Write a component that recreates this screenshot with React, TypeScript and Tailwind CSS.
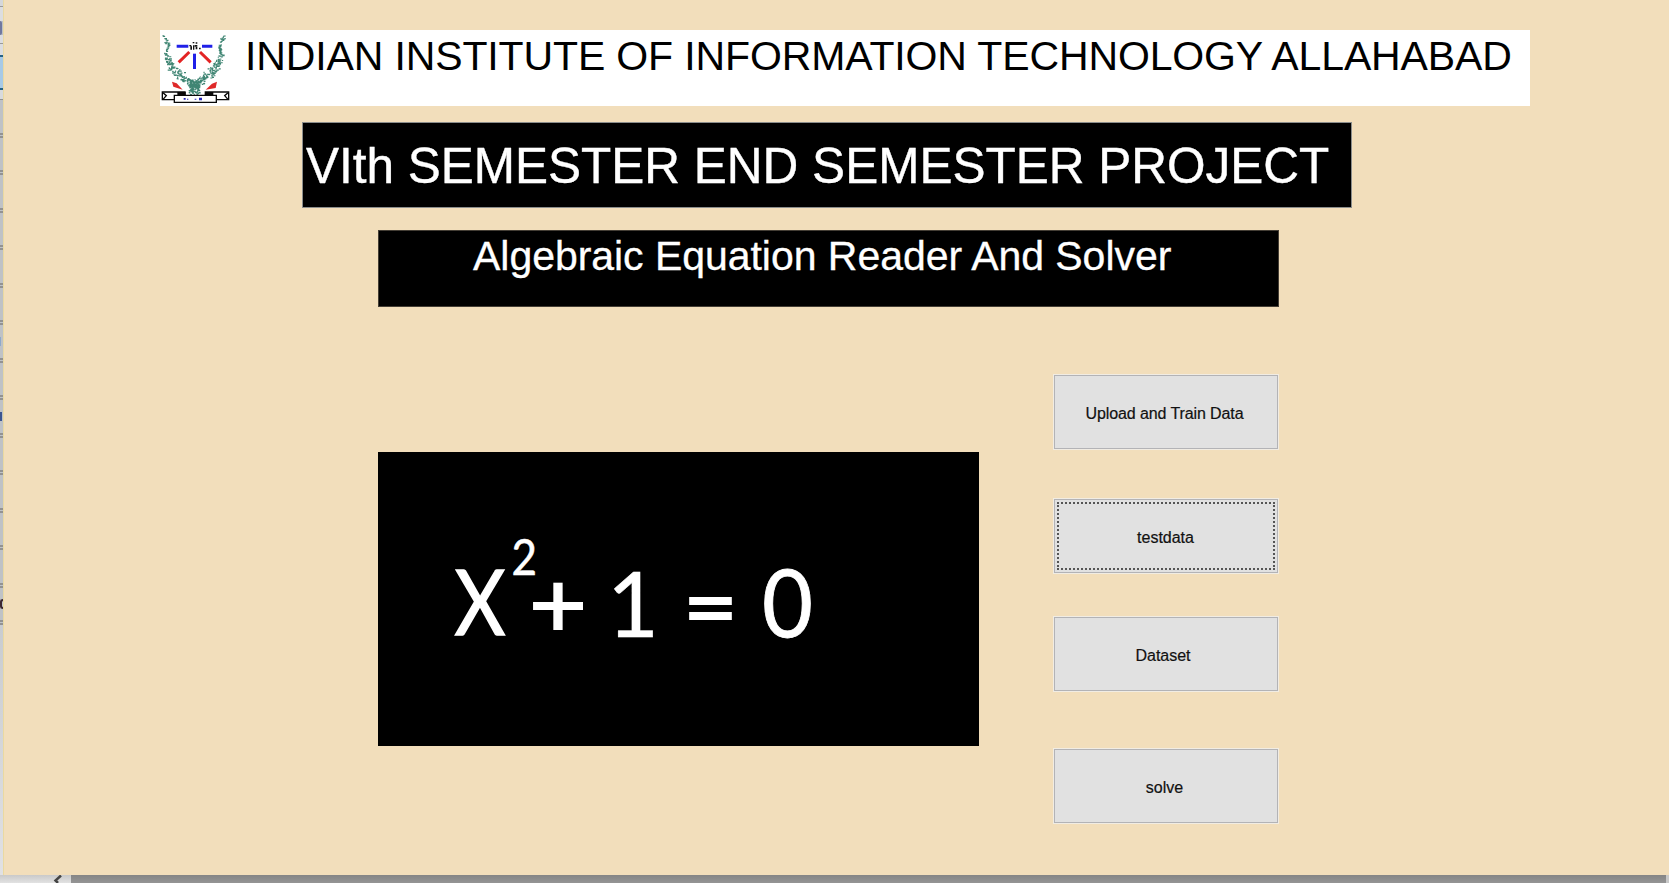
import React from 'react';

type Stop = [number, number, number];

const leftBranch: Stop[] = [
  [38, 45, 3], [48, 62, 8], [53, 80, 5], [48, 100, 8], [54, 122, 12],
  [66, 142, 17], [86, 160, 19], [106, 178, 17], [124, 192, 14],
];
const rightBranch: Stop[] = leftBranch.map(([x, y, r]) => [261 - x, y, r]);

function leaves(stops: Stop[], seed: number) {
  let s = seed;
  const next = () => {
    s = (s * 16807) % 2147483647;
    return s / 2147483647;
  };
  let d = '';
  for (let i = 0; i < stops.length - 1; i++) {
    const [x0, y0, r0] = stops[i];
    const [x1, y1, r1] = stops[i + 1];
    const count = Math.round((r0 + r1) * 0.95);
    for (let k = 0; k < count; k++) {
      const t = next();
      const r = r0 + (r1 - r0) * t;
      const x = x0 + (x1 - x0) * t + (next() - 0.5) * 1.5 * r;
      const y = y0 + (y1 - y0) * t + (next() - 0.5) * 1.1 * r;
      const w = next() > 0.5 ? 6 : 3.5;
      d += `M${x.toFixed(1)} ${y.toFixed(1)}h${w}v3.5h-${w}z`;
    }
  }
  return d;
}

const trunk: Stop[] = [[131, 182, 20], [131, 200, 20], [131, 218, 20]];
const leafPath = leaves(leftBranch, 71) + leaves(rightBranch, 913) + leaves(trunk, 37) + leaves(trunk, 531);

function Emblem() {
  return (
    <svg className="block h-[75px] w-[70px] shrink-0" viewBox="30 30 210 225">
      <path d={leafPath} fill="#3f8573" />
      <path d="M80 79H115M156 79H187" stroke="#2020e8" strokeWidth="9" />
      <path d="M133.500 101V147" stroke="#2020e8" strokeWidth="9" />
      <path d="M118 96L86 127M150 96L182 127" stroke="#e32424" strokeWidth="9" />
      <path d="M118 75h6v4h-6zM121 79h5v10h-5zM128 66h5v4h-5zM137 67h5v4h-5zM129 76h4v13h-4zM134 75h8v5h-8zM137 81h5v7h-5zM147 83h5v5h-5z" fill="#111" />
      <path d="M66 185L80 190L98 209L70 200ZM201 185L186 191L167 209L197 204Z" fill="#df2929" />
      <g fill="#fff" stroke="#080808" strokeWidth="4">
        <path d="M37 216H105V239H37Z" />
        <path d="M166 216H236V239H166Z" />
        <path d="M39 218L49 227L39 238M234 218L224 227L234 238" />
        <path d="M84 218H105V226H84ZM167 218H188V226H167Z" fill="#080808" />
        <path d="M73 226H199V247H73Z" />
      </g>
      <path d="M101 234h6v5h-6zM111 236h4v3h-4zM134 236h5v3h-5zM147 233h9v8h-9z" fill="#2525b5" />
    </svg>
  );
}

function Equation() {
  return (
    <svg className="block h-[294px] w-[601px]" viewBox="378 452 601 294" fill="#fff" stroke="#fff" fontFamily="Lato, Carlito, sans-serif">
      <text x="454.500" y="634.500" fontSize="91.500" textLength="51" lengthAdjust="spacingAndGlyphs" strokeWidth="1.500">X</text>
      <text x="511.500" y="575" fontSize="50.500" textLength="25.500" lengthAdjust="spacingAndGlyphs" strokeWidth="0.600">2</text>
      <text x="529" y="637" fontSize="92" textLength="58" lengthAdjust="spacingAndGlyphs" strokeWidth="1.800">+</text>
      <text x="607" y="636.500" fontSize="92" textLength="52" lengthAdjust="spacingAndGlyphs" strokeWidth="0.500">1</text>
      <text x="683" y="639" fontSize="92" textLength="55" lengthAdjust="spacingAndGlyphs" strokeWidth="1.800">=</text>
      <text x="762" y="636.500" fontSize="93" textLength="51" lengthAdjust="spacingAndGlyphs" strokeWidth="0.800">0</text>
    </svg>
  );
}

function Button({
  label,
  className = '',
  labelClass = 'pr-[3px]',
  focused = false,
}: {
  label: string;
  className?: string;
  labelClass?: string;
  focused?: boolean;
}) {
  return (
    <button
      className={`h-[76px] w-[226px] border border-[#f1ece3] bg-[#e1e1e1] text-[16px] leading-[18px] text-[#111] [-webkit-text-stroke:0.2px_#111] ${className}`}
    >
      <span className="flex h-full w-full border-[1.5px] border-[#b3b3b6] p-[2px]">
        <span
          className={`flex flex-1 items-center justify-center border-2 pt-[3px] ${focused ? 'border-dotted border-[#555]' : 'border-transparent'}`}
        >
          <span className={labelClass}>{label}</span>
        </span>
      </span>
    </button>
  );
}

function SideStrip() {
  return (
    <div className="flex w-[3px] shrink-0 flex-col bg-[#bfc2c6]">
      <div className="h-[7px] border-b border-[#999] bg-[#d5d7db]" />
      <div className="h-[14px] bg-[#dcdde0]" />
      <div className="h-[14px] w-[2px] rounded-r bg-[#70789f]" />
      <div className="h-[9px] border-b border-[#999] bg-[#dcdde0]" />
      <div className="h-[11px] bg-[#dcdde0]" />
      <div className="h-[35px] border-y-2 border-[#266286] bg-[#a7c9e6]" />
      <div className="h-[10px] border-b border-[#929292] bg-[#d8dadd]" />
      {Array.from({ length: 14 }, (_, i) => (
        <div key={i} className="flex h-[37.500px] items-center border-b-[5px] border-double border-[#929292]">
          {i === 8 && <div className="h-[9px] w-[2px] bg-[#3c5590]" />}
          {i === 6 && <div className="h-[9px] w-[1px] bg-[#8fa9ca]" />}
          {i === 13 && <div className="h-[10px] w-[3px] rounded-l border-2 border-r-0 border-[#3b2630]" />}
        </div>
      ))}
      <div className="flex-1 bg-gradient-to-b from-[#c9ccd0] to-[#e1e1e3]" />
    </div>
  );
}

export default function App() {
  return (
    <div className="flex h-[883px] w-[1669px] flex-col overflow-hidden bg-[#e4e4e4] font-['Liberation_Sans',Arial,sans-serif]">
      <div className="flex h-[875px]">
        <SideStrip />
        <main className="flex-1 border-l border-[#ead9a0] bg-[#f2debb] pt-[30px]">
          <header className="ml-[156px] flex h-[76px] w-[1370px] bg-white">
            <Emblem />
            <h1 className="ml-[15px] mt-[2px] whitespace-nowrap text-[41px] leading-[48px] tracking-[-0.13px] text-black">
              INDIAN INSTITUTE OF INFORMATION TECHNOLOGY ALLAHABAD
            </h1>
          </header>
          <div className="ml-[298px] mt-[16px] h-[86px] w-[1050px] border border-[#8b8d8c] bg-black pl-[3px] pt-[14px]">
            <h2 className="whitespace-nowrap text-[49.500px] leading-[58px] text-white [-webkit-text-stroke:0.4px_#fff]">
              VIth SEMESTER END SEMESTER PROJECT
            </h2>
          </div>
          <div className="ml-[374px] mt-[22px] h-[77px] w-[901px] border border-[#443e35] bg-black pl-[94px] pt-px">
            <h3 className="whitespace-nowrap text-[41px] leading-[48px] tracking-[-0.04px] text-white [-webkit-text-stroke:0.3px_#fff]">
              Algebraic Equation Reader And Solver
            </h3>
          </div>
          <div className="ml-[374px] mt-[67px] flex">
            <div className="mt-[78px] h-[294px] w-[601px] bg-black">
              <Equation />
            </div>
            <div className="ml-[74px] flex flex-col">
              <Button label="Upload and Train Data" className="tracking-[-0.1px]" />
              <Button label="testdata" focused className="mt-[48px]" labelClass="pr-[1px]" />
              <Button label="Dataset" className="mt-[42px]" labelClass="pr-[6px]" />
              <Button label="solve" className="mt-[56px]" />
            </div>
          </div>
        </main>
      </div>
      <footer className="flex h-[8px]">
        <div className="flex w-[71px] justify-end bg-gradient-to-b from-[#c9c9c9] to-[#e2e2e2] pr-[9px]">
          <svg className="h-[8px] w-[9px]" viewBox="0 0 9 8">
            <path d="M8 0.500L2.500 5.500L5 8" fill="none" stroke="#444" strokeWidth="2.500" />
          </svg>
        </div>
        <div className="flex-1 bg-gradient-to-b from-[#858585] to-[#959595]" />
        <div className="w-[3px] bg-[#c9c9c9]" />
      </footer>
    </div>
  );
}
